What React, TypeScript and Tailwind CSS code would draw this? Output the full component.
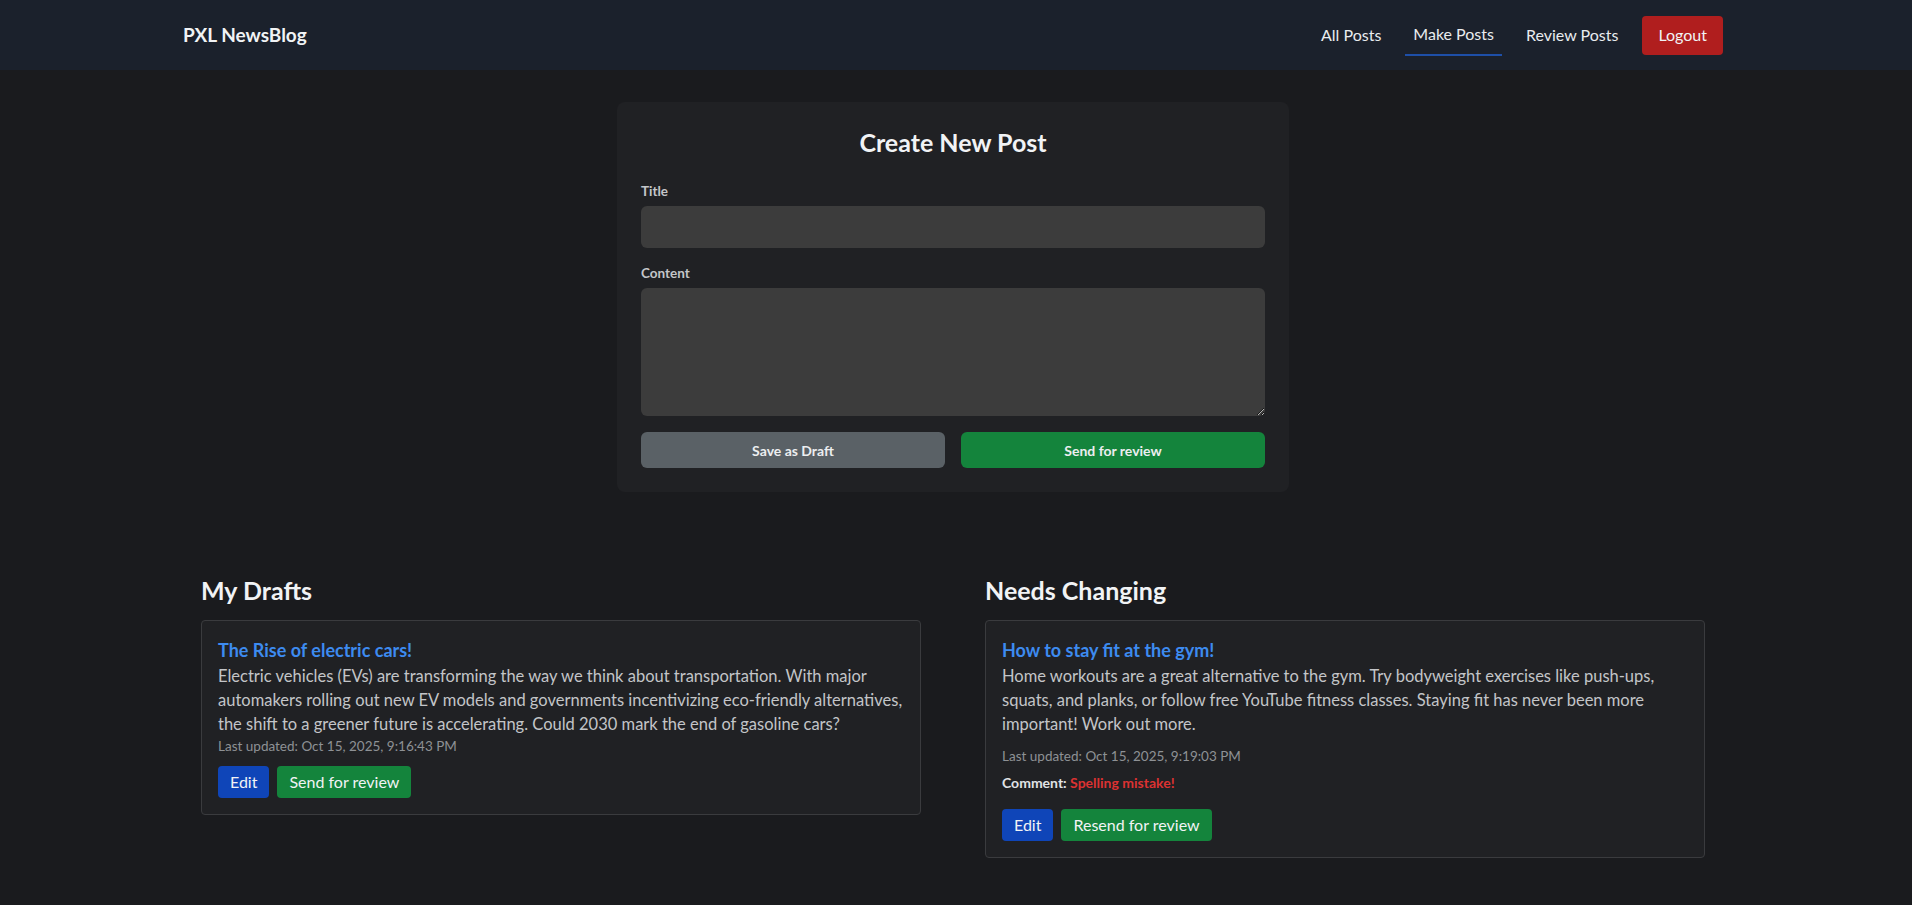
import React from "react";

const font = { fontFamily: "Lato, 'Noto Sans', sans-serif" };

type Post = {
  title: string;
  body: string;
  updated: string;
  comment?: string;
};

const drafts: Post[] = [
  {
    title: "The Rise of electric cars!",
    body: "Electric vehicles (EVs) are transforming the way we think about transportation. With major automakers rolling out new EV models and governments incentivizing eco-friendly alternatives, the shift to a greener future is accelerating. Could 2030 mark the end of gasoline cars?",
    updated: "Oct 15, 2025, 9:16:43 PM",
  },
];

const needsChanging: Post[] = [
  {
    title: "How to stay fit at the gym!",
    body: "Home workouts are a great alternative to the gym. Try bodyweight exercises like push-ups, squats, and planks, or follow free YouTube fitness classes. Staying fit has never been more important! Work out more.",
    updated: "Oct 15, 2025, 9:19:03 PM",
    comment: "Spelling mistake!",
  },
];

function Navbar() {
  return (
    <nav className="h-[70px] bg-[#1b212c] pr-[6px]">
      <div className="mx-auto flex h-full w-[1540px] items-center justify-between">
        <span className="text-[19px] font-bold text-[#f1f3f5]">PXL NewsBlog</span>
        <div className="flex items-center gap-4 text-[16px] text-[#e9ecef]">
          <a className="px-2 py-2">All Posts</a>
          <a className="border-b-2 border-[#1e4fa8] px-2 py-2">Make Posts</a>
          <a className="px-2 py-2">Review Posts</a>
          <button className="h-[39px] rounded-[4px] bg-[#b01e1e] px-4 text-[#f1f3f5]">Logout</button>
        </div>
      </div>
    </nav>
  );
}

function CreatePost() {
  return (
    <div className="mx-auto mt-8 w-[672px] rounded-lg bg-[#202124] p-6">
      <h2 className="mb-[23px] text-center text-[25px] font-bold leading-8 text-[#f1f3f5]">Create New Post</h2>
      <label className="mb-[5px] block text-[13.5px] font-bold leading-5 text-[#c4c6c9]">Title</label>
      <input className="mb-[15px] block h-[42px] w-full rounded-md bg-[#3c3c3c] px-3 text-[#e9ecef] outline-none" />
      <label className="mb-[5px] block text-[13.5px] font-bold leading-5 text-[#c4c6c9]">Content</label>
      <textarea className="block h-[128px] w-full rounded-md bg-[#3c3c3c] px-3 py-2 text-[#e9ecef] outline-none" />
      <div className="mt-4 grid grid-cols-2 gap-4">
        <button className="h-[36px] rounded-md bg-[#5a6166] text-[14px] font-bold text-[#eceef0]">Save as Draft</button>
        <button className="h-[36px] rounded-md bg-[#14843c] text-[14px] font-bold text-[#eceef0]">Send for review</button>
      </div>
    </div>
  );
}

function PostCard({ post, resend }: { post: Post; resend?: boolean }) {
  return (
    <div className="rounded-[4px] border border-[#3a3b3e] bg-[#202124] p-4">
      <h3 className="text-[18px] font-bold leading-[27px] text-[#3d8bf0]">{post.title}</h3>
      <p className="text-[16.5px] leading-6 text-[#c3c5c8]">{post.body}</p>
      <p className={`text-[13.5px] leading-5 text-[#8e9195] ${resend ? "mt-2.5" : ""}`}>
        Last updated: {post.updated}
      </p>
      {post.comment && (
        <p className="mt-[7px] text-[14px] font-bold leading-5 text-[#e1e3e6]">
          Comment: <span className="text-[#dc3232]">{post.comment}</span>
        </p>
      )}
      <div className={`flex gap-2 ${resend ? "mt-4" : "mt-2.5"}`}>
        <button className="h-[32px] rounded-[4px] bg-[#0f45b8] px-3 text-[16px] text-[#f1f3f5]">Edit</button>
        <button className="h-[32px] rounded-[4px] bg-[#14843c] px-3 text-[16px] text-[#f1f3f5]">
          {resend ? "Resend for review" : "Send for review"}
        </button>
      </div>
    </div>
  );
}

export default function App() {
  return (
    <div className="h-screen overflow-hidden bg-[#1a1b1e]" style={font}>
      <Navbar />
      <main className="pr-[6px]">
        <CreatePost />
        <div className="mx-auto mt-[82px] grid w-[1504px] grid-cols-2 gap-16">
          <section>
            <h2 className="mb-[14px] text-[25px] font-bold leading-8 text-[#f1f3f5]">My Drafts</h2>
            {drafts.map((p) => (
              <PostCard key={p.title} post={p} />
            ))}
          </section>
          <section>
            <h2 className="mb-[14px] text-[25px] font-bold leading-8 text-[#f1f3f5]">Needs Changing</h2>
            {needsChanging.map((p) => (
              <PostCard key={p.title} post={p} resend />
            ))}
          </section>
        </div>
      </main>
    </div>
  );
}
